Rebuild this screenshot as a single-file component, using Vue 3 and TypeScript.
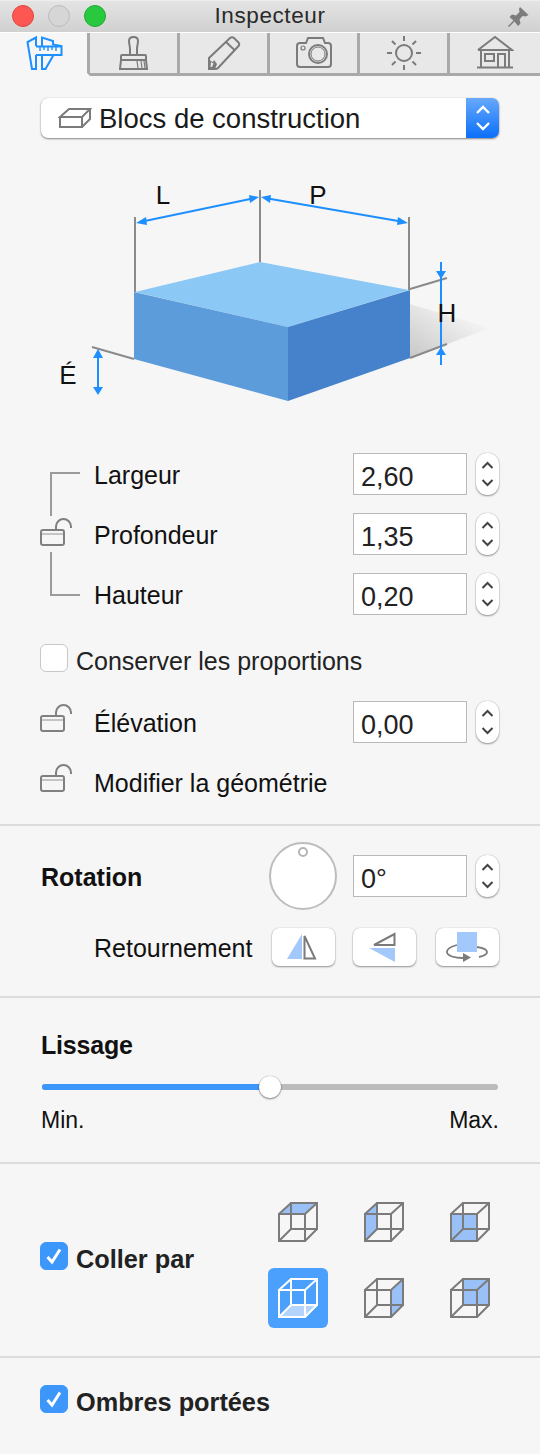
<script setup lang="ts">
interface DimRow {
  label: string
  value: string
}

const tabs = ['caliper', 'brush', 'pencil', 'camera', 'sun', 'house']

const sunRays = [0, 45, 90, 135, 180, 225, 270, 315]

const dims: DimRow[] = [
  { label: 'Largeur', value: '2,60' },
  { label: 'Profondeur', value: '1,35' },
  { label: 'Hauteur', value: '0,20' }
]

// faces of the paste cube, in the order of the grid
const cubeFaces = [
  '1,12 13,1 39,1 27,12',
  '1,12 13,1 13,27 1,39',
  '1,12 27,12 27,39 1,39',
  '1,39 13,27 39,27 27,39',
  '27,12 39,1 39,27 27,39',
  '13,1 39,1 39,27 13,27'
]
const selectedCube = 3
</script>

<template>
  <div class="window">
    <header class="titlebar">
      <div class="lights">
        <span class="light red"></span>
        <span class="light grey"></span>
        <span class="light green"></span>
      </div>
      <span class="title">Inspecteur</span>
      <svg class="pin" width="22" height="22" viewBox="0 0 22 22">
        <path d="M13 1 L21.500 9 L18.500 10.500 L15.500 10 L12.500 13.500 L13.500 17.500 L11 20 L7.500 15.500 L2 21 L1 20 L6.500 14.500 L2.500 11 L5 8.500 L9 9.500 L12.500 6 L12 3 Z" fill="#7c7c7c" />
      </svg>
    </header>

    <nav class="tabs">
      <div v-for="(tab, i) in tabs" :key="tab" class="tab" :class="{ active: i === 0 }">
        <svg v-if="tab === 'caliper'" width="38" height="36" viewBox="25 35 38 36" fill="none" stroke="#1e8fff" stroke-width="2">
          <path d="M36 46 V37.500 L27.500 42 L32 69 H36 V55" />
          <path d="M42 46 V37.500 L53 41 V44.500 L61.500 46 V55 H53.500 L45.500 69 H42 V55" />
          <path d="M36 46.500 H61.500 M36 55 H54" />
          <path d="M40 47 V51 M44 47 V50 M48 47 V51 M52 47 V50 M56 47 V51" stroke-width="1.400" />
        </svg>
        <svg v-else-if="tab === 'brush'" width="30" height="36" viewBox="119 35 30 36" fill="none" stroke="#7b7b7b" stroke-width="2">
          <path d="M130 55 V49 C130 46 129 44 129 41 C129 38 131 37 133.500 37 C136 37 138 38 138 41 C138 44 137 46 137 49 V55" />
          <path d="M121 60 V56 Q121 55 122 55 H145 Q146 55 146 56 V60 Z" />
          <path d="M121 60 L120 69 H147 L146 60" />
          <path d="M137 61 L138 68 M141 61 L142 68 M144 61 L145 68" stroke-width="1.200" />
        </svg>
        <svg v-else-if="tab === 'pencil'" width="34" height="36" viewBox="207 35 34 36" fill="none" stroke="#7b7b7b" stroke-width="2">
          <path d="M209 58 L230 38 Q232 36.500 234 38 L238.500 42.500 Q240 44.500 238.500 46 L218 68 Q217 69 215 69 H209 Z" />
          <path d="M226 42 L235 50.500" />
          <path d="M209 60 L213 62 L214 60 L217 64 L215 69 H209 Z" fill="#7b7b7b" stroke="none" />
          <path d="M211 62 L213.500 63.500 L212 67 H210.500 Z" fill="#e8e8e8" stroke="none" />
        </svg>
        <svg v-else-if="tab === 'camera'" width="38" height="34" viewBox="295 36 38 34" fill="none" stroke="#7b7b7b" stroke-width="2">
          <path d="M300 44 H306 L308 39 H323 L325 44 H328 Q331 44 331 47 V65 Q331 68 328 68 H300 Q297 68 297 65 V47 Q297 44 300 44 Z" />
          <circle cx="318" cy="55" r="9" />
          <circle cx="318" cy="55" r="7" stroke-width="1" />
          <circle cx="303" cy="49" r="2" stroke-width="1.200" />
        </svg>
        <svg v-else-if="tab === 'sun'" width="36" height="36" viewBox="385 34 36 36" fill="none" stroke="#7b7b7b" stroke-width="2">
          <circle cx="403" cy="52" r="8" />
          <line
            v-for="angle in sunRays"
            :key="angle"
            x1="403"
            y1="40"
            x2="403"
            y2="35"
            :transform="`rotate(${angle} 403 52)`"
          />
        </svg>
        <svg v-else width="38" height="34" viewBox="475 37 38 34" fill="none" stroke="#7b7b7b" stroke-width="2">
          <path d="M477 52 L494 39 L511 52 H477" />
          <path d="M480 52 V69 M508 52 V69" />
          <path d="M476 69.500 H512" />
          <rect x="484" y="56" width="9" height="7" />
          <path d="M497 69 V56 H504 V69" />
        </svg>
      </div>
    </nav>

    <div class="select">
      <svg class="brick" width="34" height="22" viewBox="0 0 34 22" fill="none" stroke="#7b7b7b" stroke-width="2">
        <path d="M2 10 L11 2 H32 L24 10 Z" />
        <path d="M2 10 V20 H24 V10" />
        <path d="M24 20 L32 12 V2" />
      </svg>
      <span class="select-text">Blocs de construction</span>
      <span class="select-cap">
        <svg width="16" height="30" viewBox="0 0 16 30" fill="none" stroke="#fff" stroke-width="2.400">
          <path d="M2 10 L8 4 L14 10" />
          <path d="M2 20 L8 26 L14 20" />
        </svg>
      </span>
    </div>

    <svg class="diagram" width="540" height="292" viewBox="0 138 540 292">
      <defs>
        <linearGradient id="shadow" gradientUnits="userSpaceOnUse" x1="410" y1="362" x2="452" y2="300">
          <stop offset="0" stop-color="#c6c6c6" />
          <stop offset="1" stop-color="#f6f6f6" />
        </linearGradient>
      </defs>
      <polygon points="410,304 490,328 410,358" fill="url(#shadow)" />
      <g stroke="#8a8a8a" stroke-width="2" fill="none">
        <path d="M135 217 V292 M260 190 V262 M409 217 V290" />
        <path d="M410 289 L447 278 M410 358 L447 344 M92 347 L134 359" />
      </g>
      <polygon points="135,292 260,262 409,290 288,327" fill="#8cc8f5" />
      <polygon points="134,292 288,327 288,401 134,359" fill="#5c9cdb" />
      <polygon points="288,327 410,290 410,358 288,401" fill="#4682cc" />
      <g stroke="#1e8fff" stroke-width="2" fill="none">
        <path d="M140 222 L255 198 M265 198 L404 222" />
        <path d="M441 262 V365" />
        <path d="M98 355 V390" />
      </g>
      <g fill="#1e8fff">
        <polygon points="136,223 146,217 147,225" />
        <polygon points="259,197 249,195 250,203" />
        <polygon points="261,197 271,195 270,203" />
        <polygon points="408,223 398,217 397,225" />
        <polygon points="441,279 436,271 446,271" />
        <polygon points="441,347 436,355 446,355" />
        <polygon points="98,349 93,358 103,358" />
        <polygon points="98,395 93,387 103,387" />
      </g>
      <g class="diagram-label">
        <text x="163" y="204" text-anchor="middle">L</text>
        <text x="318" y="204" text-anchor="middle">P</text>
        <text x="447" y="322" text-anchor="middle">H</text>
        <text x="68" y="384" text-anchor="middle">É</text>
      </g>
    </svg>

    <section class="dims">
      <svg class="dims-link" width="94" height="162" viewBox="0 453 94 162" fill="none" stroke="#9b9b9b" stroke-width="2">
        <path d="M80 473 H51 V516" />
        <path d="M51 552 V595 H80" />
        <g transform="translate(40 518)" stroke="#808080">
          <rect x="1" y="12" width="23" height="15" rx="2" />
          <path d="M2 16 H23" stroke="#c4c4c4" />
          <path d="M16 12 V8.500 a7.500 7.500 0 0 1 15 0 V10" />
        </g>
      </svg>
      <div class="dims-rows">
        <div v-for="dim in dims" :key="dim.label" class="row">
          <span class="label">{{ dim.label }}</span>
          <span class="field">{{ dim.value }}</span>
          <span class="stepper">
            <svg width="15" height="30" viewBox="0 0 15 30" fill="none" stroke="#444" stroke-width="2">
              <path d="M2.500 9 L7.500 4 L12.500 9" />
              <path d="M2.500 21 L7.500 26 L12.500 21" />
            </svg>
          </span>
        </div>
      </div>
    </section>

    <label class="check-row keep">
      <span class="check"></span>
      <span class="check-text">Conserver les proportions</span>
    </label>

    <div class="row lock-row elevation">
      <svg class="lock" width="32" height="28" viewBox="0 0 32 28" fill="none" stroke="#808080" stroke-width="2">
        <rect x="1" y="12" width="23" height="15" rx="2" />
        <path d="M2 16 H23" stroke="#c4c4c4" />
        <path d="M16 12 V8.500 a7.500 7.500 0 0 1 15 0 V10" />
      </svg>
      <span class="label">Élévation</span>
      <span class="field">0,00</span>
      <span class="stepper">
        <svg width="15" height="30" viewBox="0 0 15 30" fill="none" stroke="#444" stroke-width="2">
          <path d="M2.500 9 L7.500 4 L12.500 9" />
          <path d="M2.500 21 L7.500 26 L12.500 21" />
        </svg>
      </span>
    </div>

    <div class="row lock-row geometry">
      <svg class="lock" width="32" height="28" viewBox="0 0 32 28" fill="none" stroke="#808080" stroke-width="2">
        <rect x="1" y="12" width="23" height="15" rx="2" />
        <path d="M2 16 H23" stroke="#c4c4c4" />
        <path d="M16 12 V8.500 a7.500 7.500 0 0 1 15 0 V10" />
      </svg>
      <span class="label">Modifier la géométrie</span>
    </div>

    <section class="rotation">
      <div class="rotation-top">
        <span class="heading">Rotation</span>
        <span class="knob"><span class="knob-dot"></span></span>
        <span class="field">0°</span>
        <span class="stepper">
          <svg width="15" height="30" viewBox="0 0 15 30" fill="none" stroke="#444" stroke-width="2">
            <path d="M2.500 9 L7.500 4 L12.500 9" />
            <path d="M2.500 21 L7.500 26 L12.500 21" />
          </svg>
        </span>
      </div>
      <div class="flip-row">
        <span class="label">Retournement</span>
        <button class="flip">
          <svg width="63" height="38" viewBox="272 928 63 38">
            <polygon points="287,959 302,959 302,934" fill="#a3c8fb" />
            <polygon points="304.500,936 304.500,958.500 315,958.500" fill="none" stroke="#7b7b7b" stroke-width="2" />
          </svg>
        </button>
        <button class="flip">
          <svg width="63" height="38" viewBox="353 928 63 38">
            <polygon points="394.500,934 394.500,945 374,945" fill="none" stroke="#7b7b7b" stroke-width="2" />
            <polygon points="369,948 395,948 395,962" fill="#a3c8fb" />
          </svg>
        </button>
        <button class="flip flip-last">
          <svg width="63" height="38" viewBox="436 928 63 38">
            <path d="M457 945 C449 947 447 950 447 952 C447 956 455 958 463 958 M477 947 C484 948 487 950 487 952 C487 954 484 956 479 957" fill="none" stroke="#7b7b7b" stroke-width="1.800" />
            <rect x="457" y="932" width="20" height="20" fill="#a3c8fb" />
            <polygon points="463,953 471,957.500 463,962" fill="#7b7b7b" />
          </svg>
        </button>
      </div>
    </section>

    <section class="smoothing">
      <span class="heading">Lissage</span>
      <div class="slider">
        <span class="slider-fill"></span>
        <span class="slider-thumb"></span>
      </div>
      <div class="slider-ends">
        <span>Min.</span>
        <span>Max.</span>
      </div>
    </section>

    <section class="paste">
      <label class="check-row paste-label">
        <span class="check on">
          <svg width="20" height="20" viewBox="0 0 20 20" fill="none" stroke="#fff" stroke-width="3">
            <path d="M3.500 11 L8 16 L16 3.500" />
          </svg>
        </span>
        <span class="check-text strong">Coller par</span>
      </label>
      <div class="cube-grid">
        <span v-for="(face, i) in cubeFaces" :key="face" class="cube" :class="{ selected: i === selectedCube }">
          <svg width="40" height="40" viewBox="0 0 40 40" fill="none">
            <polygon :points="face" class="cube-face" />
            <path class="cube-wire" d="M1 12 H27 V39 H1 Z M13 1 H39 V27 H13 Z M1 12 L13 1 M27 12 L39 1 M27 39 L39 27 M1 39 L13 27" stroke-width="2" />
          </svg>
        </span>
      </div>
    </section>

    <section class="shadows">
      <label class="check-row">
        <span class="check on">
          <svg width="20" height="20" viewBox="0 0 20 20" fill="none" stroke="#fff" stroke-width="3">
            <path d="M3.500 11 L8 16 L16 3.500" />
          </svg>
        </span>
        <span class="check-text strong">Ombres portées</span>
      </label>
    </section>
  </div>
</template>

<style>
html,
body {
  margin: 0;
  background: #f6f6f6;
}
</style>

<style scoped>
.window {
  width: 540px;
  height: 1454px;
  overflow: hidden;
  background: #f6f6f6;
  color: #1a1a1a;
  font-family: "Liberation Sans", Arial, sans-serif;
  font-size: 25px;
}

.titlebar {
  position: relative;
  height: 32px;
  display: flex;
  align-items: center;
  justify-content: center;
  box-sizing: border-box;
  border-top: 1px solid #eee;
  background: linear-gradient(#e4e4e4, #d0d0d0);
}

.title {
  font-size: 22.500px;
  letter-spacing: 0.600px;
  color: #2a2a2a;
  margin-top: -2px;
}

.lights {
  position: absolute;
  left: 12px;
  top: 4px;
  display: flex;
  gap: 14px;
}

.light {
  width: 22px;
  height: 22px;
  box-sizing: border-box;
  border-radius: 50%;
  border: 1px solid transparent;
}

.light.red {
  background: #fc5753;
  border-color: #e0443e;
}

.light.grey {
  background: #d6d6d6;
  border-color: #bcbcbc;
}

.light.green {
  background: #28c83f;
  border-color: #1eab2f;
}

.pin {
  position: absolute;
  left: 507px;
  top: 5px;
}

.tabs {
  display: flex;
  height: 44px;
  border-top: 1px solid #fff;
  box-sizing: border-box;
}

.tab {
  width: 90px;
  flex: none;
  display: flex;
  align-items: flex-start;
  justify-content: center;
  padding-top: 2px;
  box-sizing: border-box;
  background: #e8e8e8;
  border-right: 3px solid #a9a9a9;
  border-bottom: 3px solid #a9a9a9;
}

.tab:last-child {
  border-right: none;
}

.tab.active {
  background: #f6f6f6;
  border-bottom-color: #f6f6f6;
}

.select {
  display: flex;
  align-items: center;
  height: 40px;
  margin: 22px 41px 0;
  border-radius: 7px;
  background: #fff;
  box-shadow: 0 1px 2px rgba(0, 0, 0, 0.45), 0 0 1px rgba(0, 0, 0, 0.25);
  overflow: hidden;
}

.brick {
  margin-left: 17px;
  flex: none;
}

.select-text {
  margin-left: 7px;
  padding-top: 2px;
  flex: 1;
  font-size: 27.500px;
  white-space: nowrap;
}

.select-cap {
  width: 33px;
  height: 100%;
  display: flex;
  align-items: center;
  justify-content: center;
  background: linear-gradient(#68a9fb, #0a6ffa);
}

.diagram {
  display: block;
}

.diagram-label text {
  font-size: 26px;
  fill: #111;
}

.dims {
  display: flex;
  margin-top: 23px;
}

.dims-link {
  flex: none;
}

.dims-rows {
  flex: 1;
  display: flex;
  flex-direction: column;
  gap: 18px;
}

.row {
  display: flex;
  align-items: center;
  height: 42px;
  padding-right: 41px;
}

.label {
  flex: 1;
  padding-top: 2px;
  color: #111;
  white-space: nowrap;
}

.field {
  flex: none;
  width: 114px;
  height: 42px;
  box-sizing: border-box;
  border: 1px solid #b9b9b9;
  background: #fff;
  padding-left: 7px;
  line-height: 46px;
  font-size: 27px;
  color: #222;
}

.stepper {
  flex: none;
  width: 23px;
  height: 42px;
  margin-left: 9px;
  display: flex;
  align-items: center;
  justify-content: center;
  background: #fff;
  border-radius: 11px;
  box-shadow: 0 1px 2px rgba(0, 0, 0, 0.4), 0 0 1px rgba(0, 0, 0, 0.3);
}

.check-row {
  display: flex;
  align-items: center;
  gap: 8px;
  height: 28px;
  padding-left: 40px;
}

.keep {
  margin-top: 29px;
}

.check {
  width: 28px;
  height: 28px;
  box-sizing: border-box;
  flex: none;
  display: flex;
  align-items: center;
  justify-content: center;
  border-radius: 6px;
  background: #fff;
  border: 1px solid #c8c8c8;
}

.check.on {
  background: #3d97fb;
  border-color: #3d97fb;
}

.check-text {
  padding-top: 6px;
  color: #222;
  white-space: nowrap;
}

.check-text.strong {
  font-weight: 700;
  font-size: 25.300px;
}

.lock-row {
  padding-left: 40px;
}

.lock {
  flex: none;
  margin-right: 22px;
  margin-bottom: 8px;
}

.elevation {
  margin-top: 29px;
}

.geometry {
  margin-top: 18px;
}

.rotation {
  margin-top: 21px;
  padding: 16px 41px 30px;
  border-top: 2px solid #dcdcdc;
  border-bottom: 2px solid #dcdcdc;
}

.rotation-top {
  display: flex;
  align-items: center;
}

.heading {
  font-size: 25px;
  font-weight: 700;
  color: #111;
}

.rotation-top .heading {
  width: 228px;
  flex: none;
  padding-top: 2px;
}

.knob {
  position: relative;
  flex: none;
  width: 68px;
  height: 68px;
  margin-right: 16px;
  box-sizing: border-box;
  border: 2px solid #bdbdbd;
  border-radius: 50%;
  background: #fff;
}

.knob-dot {
  position: absolute;
  left: 27px;
  top: 3px;
  width: 10px;
  height: 10px;
  box-sizing: border-box;
  border: 2px solid #b5b5b5;
  border-radius: 50%;
}

.flip-row {
  display: flex;
  align-items: center;
  margin-top: 18px;
  padding-left: 53px;
}

.flip {
  flex: none;
  width: 63px;
  height: 38px;
  padding: 0;
  margin-left: 18px;
  border: none;
  border-radius: 7px;
  background: #fff;
  box-shadow: 0 1px 2px rgba(0, 0, 0, 0.4), 0 0 1px rgba(0, 0, 0, 0.3);
}

.flip svg {
  display: block;
}

.flip-last {
  margin-left: 20px;
}

.smoothing {
  padding: 32px 41px 0;
  height: 166px;
  box-sizing: border-box;
  border-bottom: 2px solid #dcdcdc;
}

.smoothing .heading {
  display: block;
  line-height: 30px;
  letter-spacing: -0.200px;
}

.slider {
  position: relative;
  height: 6px;
  margin: 24px 1px 0;
  border-radius: 3px;
  background: #bcbcbc;
}

.slider-fill {
  position: absolute;
  left: 0;
  top: 0;
  bottom: 0;
  width: 228px;
  border-radius: 3px;
  background: #3d97fb;
}

.slider-thumb {
  position: absolute;
  left: 217px;
  top: -8px;
  width: 22px;
  height: 22px;
  border-radius: 50%;
  background: #fff;
  box-shadow: 0 1px 2px rgba(0, 0, 0, 0.45), 0 0 1px rgba(0, 0, 0, 0.4);
}

.slider-ends {
  display: flex;
  justify-content: space-between;
  margin-top: 16px;
  line-height: 28px;
  font-size: 23px;
  color: #111;
}

.paste {
  display: flex;
  align-items: center;
  justify-content: space-between;
  height: 194px;
  box-sizing: border-box;
  padding-right: 27px;
  border-bottom: 2px solid #dcdcdc;
}

.paste-label {
  margin-bottom: 8px;
}

.cube-grid {
  display: grid;
  grid-template-columns: repeat(3, 86px);
  grid-auto-rows: 60px;
  row-gap: 16px;
}

.cube {
  display: flex;
  align-items: center;
  justify-content: center;
  border-radius: 6px;
  width: 60px;
  height: 60px;
  justify-self: center;
}

.cube-face {
  fill: #9ac1f7;
}

.cube-wire {
  stroke: #7b7b7b;
}

.cube.selected {
  background: #4aa0fc;
}

.cube.selected .cube-face {
  fill: #b4d4fd;
}

.cube.selected .cube-wire {
  stroke: #fff;
}

.shadows {
  padding-top: 27px;
}
</style>
